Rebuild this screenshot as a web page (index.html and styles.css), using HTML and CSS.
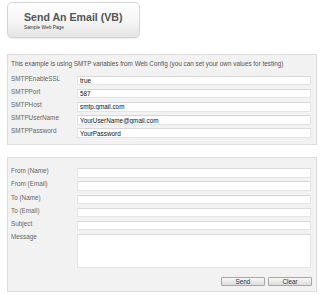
FILE: index.html
```html
<!DOCTYPE html>
<html>
<head>
<meta charset="utf-8">
<title>Send An Email (VB)</title>
<link rel="stylesheet" href="styles.css">
</head>
<body>
<div class="page">
  <div class="header">
    <h1 class="title">Send An Email (VB)</h1>
    <div class="subtitle">Sample Web Page</div>
  </div>

  <div class="panel panel-config">
    <p class="intro">This example is using SMTP variables from Web Config (you can set your own values for testing)</p>
    <div class="rows">
      <div class="row"><label class="label">SMTPEnableSSL</label><input class="field" type="text" value="true"></div>
      <div class="row"><label class="label">SMTPPort</label><input class="field" type="text" value="587"></div>
      <div class="row"><label class="label">SMTPHost</label><input class="field" type="text" value="smtp.gmail.com"></div>
      <div class="row"><label class="label">SMTPUserName</label><input class="field" type="text" value="YourUserName@gmail.com"></div>
      <div class="row"><label class="label">SMTPPassword</label><input class="field" type="text" value="YourPassword"></div>
    </div>
  </div>

  <div class="panel panel-mail">
    <div class="rows">
      <div class="row"><label class="label">From (Name)</label><input class="field" type="text"></div>
      <div class="row"><label class="label">From (Email)</label><input class="field" type="text"></div>
      <div class="row"><label class="label">To (Name)</label><input class="field" type="text"></div>
      <div class="row"><label class="label">To (Email)</label><input class="field" type="text"></div>
      <div class="row"><label class="label">Subject</label><input class="field" type="text"></div>
      <div class="row"><label class="label">Message</label><textarea class="field area"></textarea></div>
    </div>
    <div class="actions">
      <button class="btn" type="button">Send</button>
      <button class="btn" type="button">Clear</button>
    </div>
  </div>
</div>
</body>
</html>
```

FILE: styles.css
```css
html, body {
  margin: 0;
  padding: 0;
  background: #ffffff;
}

.page {
  padding: 2px 3px 0 7px;
  font-family: "Liberation Sans", Arial, sans-serif;
}

.header {
  width: 133px;
  box-sizing: border-box;
  height: 36px;
  border: 1px solid #d4d4d4;
  border-radius: 5px;
  background: linear-gradient(#ffffff 0%, #f6f6f6 50%, #e4e4e4 100%);
  box-shadow: 0 1px 1px rgba(0, 0, 0, 0.08);
  padding: 8px 0 0 16px;
}

.title {
  margin: 0;
  font-size: 10.6px;
  line-height: 12px;
  font-weight: bold;
  color: #555555;
}

.subtitle {
  margin-top: 2px;
  font-size: 4.8px;
  line-height: 6px;
  color: #333333;
}

.panel {
  border: 1px solid #dddddd;
  background: #f2f2f2;
  padding-left: 3px;
  padding-right: 5px;
}

.panel-config {
  margin-top: 16px;
  padding-top: 4.5px;
  padding-bottom: 6px;
}

.panel-mail {
  margin-top: 12px;
  padding-top: 10.3px;
  padding-bottom: 5px;
}

.intro {
  margin: 0 0 8.2px 0;
  font-size: 6.35px;
  line-height: 8px;
  color: #555555;
  white-space: nowrap;
}

.rows {
  display: flex;
  flex-direction: column;
  gap: 3.7px;
}

.row {
  display: flex;
  align-items: flex-start;
}

.label {
  flex: 0 0 66px;
  font-size: 6.35px;
  line-height: 6px;
  color: #666666;
}

.field {
  flex: 1 1 auto;
  min-width: 0;
  box-sizing: border-box;
  height: 9.5px;
  margin: 0;
  padding: 0 0 0 2px;
  border: 1px solid #e4e4e4;
  border-top-color: #d8d8d8;
  background: #ffffff;
  font-family: "Liberation Sans", Arial, sans-serif;
  font-size: 6.35px;
  line-height: 7px;
  color: #111111;
  outline: none;
}

.area {
  height: 34px;
  resize: none;
}

.actions {
  display: flex;
  justify-content: flex-end;
  gap: 3px;
  margin-top: 8.7px;
  margin-right: -1px;
}

.btn {
  box-sizing: border-box;
  width: 44px;
  height: 9px;
  margin: 0;
  padding: 0;
  border: 1px solid #a8a8a8;
  border-radius: 1px;
  background: linear-gradient(#f8f8f8, #dcdcdc);
  font-family: "Liberation Sans", Arial, sans-serif;
  font-size: 6.35px;
  line-height: 7px;
  color: #333333;
}
```
